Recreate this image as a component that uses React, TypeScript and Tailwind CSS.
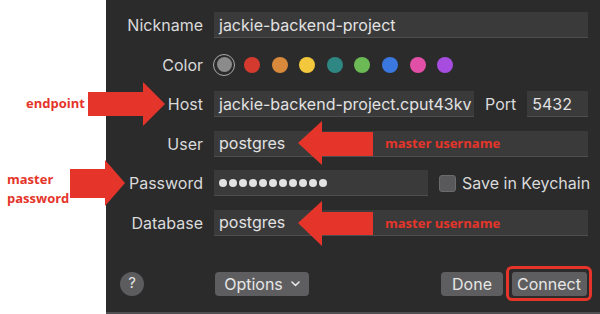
import React from "react";

const RED = "#e5352a";

function Field({ w, value }: { w: string; value: string }) {
  return (
    <div
      className={`${w} h-[26px] bg-[#3a3a3b] border-b border-[#4e4e50] flex items-center pl-[5px] overflow-hidden whitespace-nowrap text-[#e2e2e2]`}
    >
      {value}
    </div>
  );
}

function Label({ children }: { children: React.ReactNode }) {
  return <div className="w-[97px] text-right text-[#dadada] shrink-0">{children}</div>;
}

export default function App() {
  const colors = ["#d43b2e", "#d9893b", "#f3c83c", "#2e8783", "#6cba55", "#3a77de", "#e24fa6", "#a64de0"];
  return (
    <div
      className="relative w-[600px] h-[314px] flex bg-white overflow-hidden"
      style={{ fontFamily: "Inter, 'Noto Sans', sans-serif" }}
    >
      <div className="w-[106px] shrink-0 bg-white" />
      <div className="flex-1 bg-[#2b2b2c] flex flex-col border-b-2 border-[#505052] text-[16px]">
        <div className="flex flex-col gap-[13.5px] pt-[12px]">
          <div className="flex items-center h-[26px]">
            <Label>Nickname</Label>
            <div className="ml-[11px]">
              <Field w="w-[374px]" value="jackie-backend-project" />
            </div>
          </div>
          <div className="flex items-center h-[26px]">
            <Label>Color</Label>
            <div className="ml-[10px] flex items-center">
              <div className="w-[22px] h-[22px] rounded-full border-[1.5px] border-[#a9a9a9] flex items-center justify-center">
                <div className="w-[15px] h-[15px] rounded-full bg-[#8b8b8b]" />
              </div>
              <div className="ml-[9px] flex items-center gap-[11.6px]">
                {colors.map((c) => (
                  <div key={c} className="w-4 h-4 rounded-full" style={{ backgroundColor: c }} />
                ))}
              </div>
            </div>
          </div>
          <div className="flex items-center h-[26px]">
            <Label>Host</Label>
            <div className="ml-[11px] flex items-center">
              <Field w="w-[260px]" value="jackie-backend-project.cput43kv" />
              <div className="ml-[11px] text-[#dadada]">Port</div>
              <div className="ml-[11px]">
                <Field w="w-[61px]" value="5432" />
              </div>
            </div>
          </div>
          <div className="flex items-center h-[26px]">
            <Label>User</Label>
            <div className="ml-[11px]">
              <Field w="w-[374px]" value="postgres" />
            </div>
          </div>
          <div className="flex items-center h-[26px]">
            <Label>Password</Label>
            <div className="ml-[11px] flex items-center">
              <div className="w-[214px] h-[26px] bg-[#3a3a3b] border-b border-[#4e4e50] flex items-center pl-[5px] gap-[2px]">
                {Array.from({ length: 11 }).map((_, i) => (
                  <div key={i} className="w-[8px] h-[8px] rounded-full bg-[#e2e2e2]" />
                ))}
              </div>
              <div className="ml-[11px] w-[17px] h-[17px] rounded-[3px] bg-[#59595b] border border-[#6b6b6d]" />
              <div className="ml-[6px] text-[#dadada] whitespace-nowrap">Save in Keychain</div>
            </div>
          </div>
          <div className="flex items-center h-[26px]">
            <Label>Database</Label>
            <div className="ml-[11px]">
              <Field w="w-[374px]" value="postgres" />
            </div>
          </div>
        </div>
        <div className="mt-auto mb-[11px] flex items-center pl-[14px] pr-[8px]">
          <div className="w-6 h-6 rounded-full bg-[#5c5c5e] flex items-center justify-center text-[#e4e4e4] text-[15px]">
            ?
          </div>
          <div className="ml-[71px] w-[94px] h-[24px] rounded-[4px] bg-[#5e5e60] flex items-center justify-center gap-[8px] text-[#e6e6e6]">
            <span>Options</span>
            <svg width="9" height="6" viewBox="0 0 9 6" fill="none">
              <path d="M1 1l3.5 3.5L8 1" stroke="#e6e6e6" strokeWidth="1.6" strokeLinecap="round" strokeLinejoin="round" />
            </svg>
          </div>
          <div className="ml-auto w-[62px] h-[24px] rounded-[4px] bg-[#5e5e60] flex items-center justify-center text-[#e6e6e6]">
            Done
          </div>
          <div className="ml-[3px] rounded-[6px] border-[3px] border-[#e5352a] p-[2.5px]">
            <div className="w-[75px] h-[24px] rounded-[3px] bg-[#5e5e60] flex items-center justify-center text-[#e6e6e6]">
              Connect
            </div>
          </div>
        </div>
      </div>

      <svg className="absolute inset-0 pointer-events-none" width="600" height="314" viewBox="0 0 600 314">
        <polygon points="88,92 143,92 143,82 165,104 143,126 143,116 88,116" fill={RED} />
        <polygon points="70,169 105,169 105,160 125,183 105,206 105,198 70,198" fill={RED} />
        <polygon points="373,132 322,132 322,121 298,143 322,165 322,156 373,156" fill={RED} />
        <polygon points="373,212 322,212 322,201 298,223 322,246 322,235 373,235" fill={RED} />
      </svg>

      <div
        className="absolute inset-0 pointer-events-none font-bold text-[13px] text-[#e5352a]"
        style={{ fontFamily: "'Open Sans', sans-serif" }}
      >
        <div className="absolute left-[26px] top-[94px] leading-[18px]">endpoint</div>
        <div className="absolute left-[7px] top-[170px] leading-[19px]">
          master
          <br />
          password
        </div>
        <div className="absolute left-[385px] top-[134px] leading-[18px]">master username</div>
        <div className="absolute left-[385px] top-[214px] leading-[18px]">master username</div>
      </div>
    </div>
  );
}
